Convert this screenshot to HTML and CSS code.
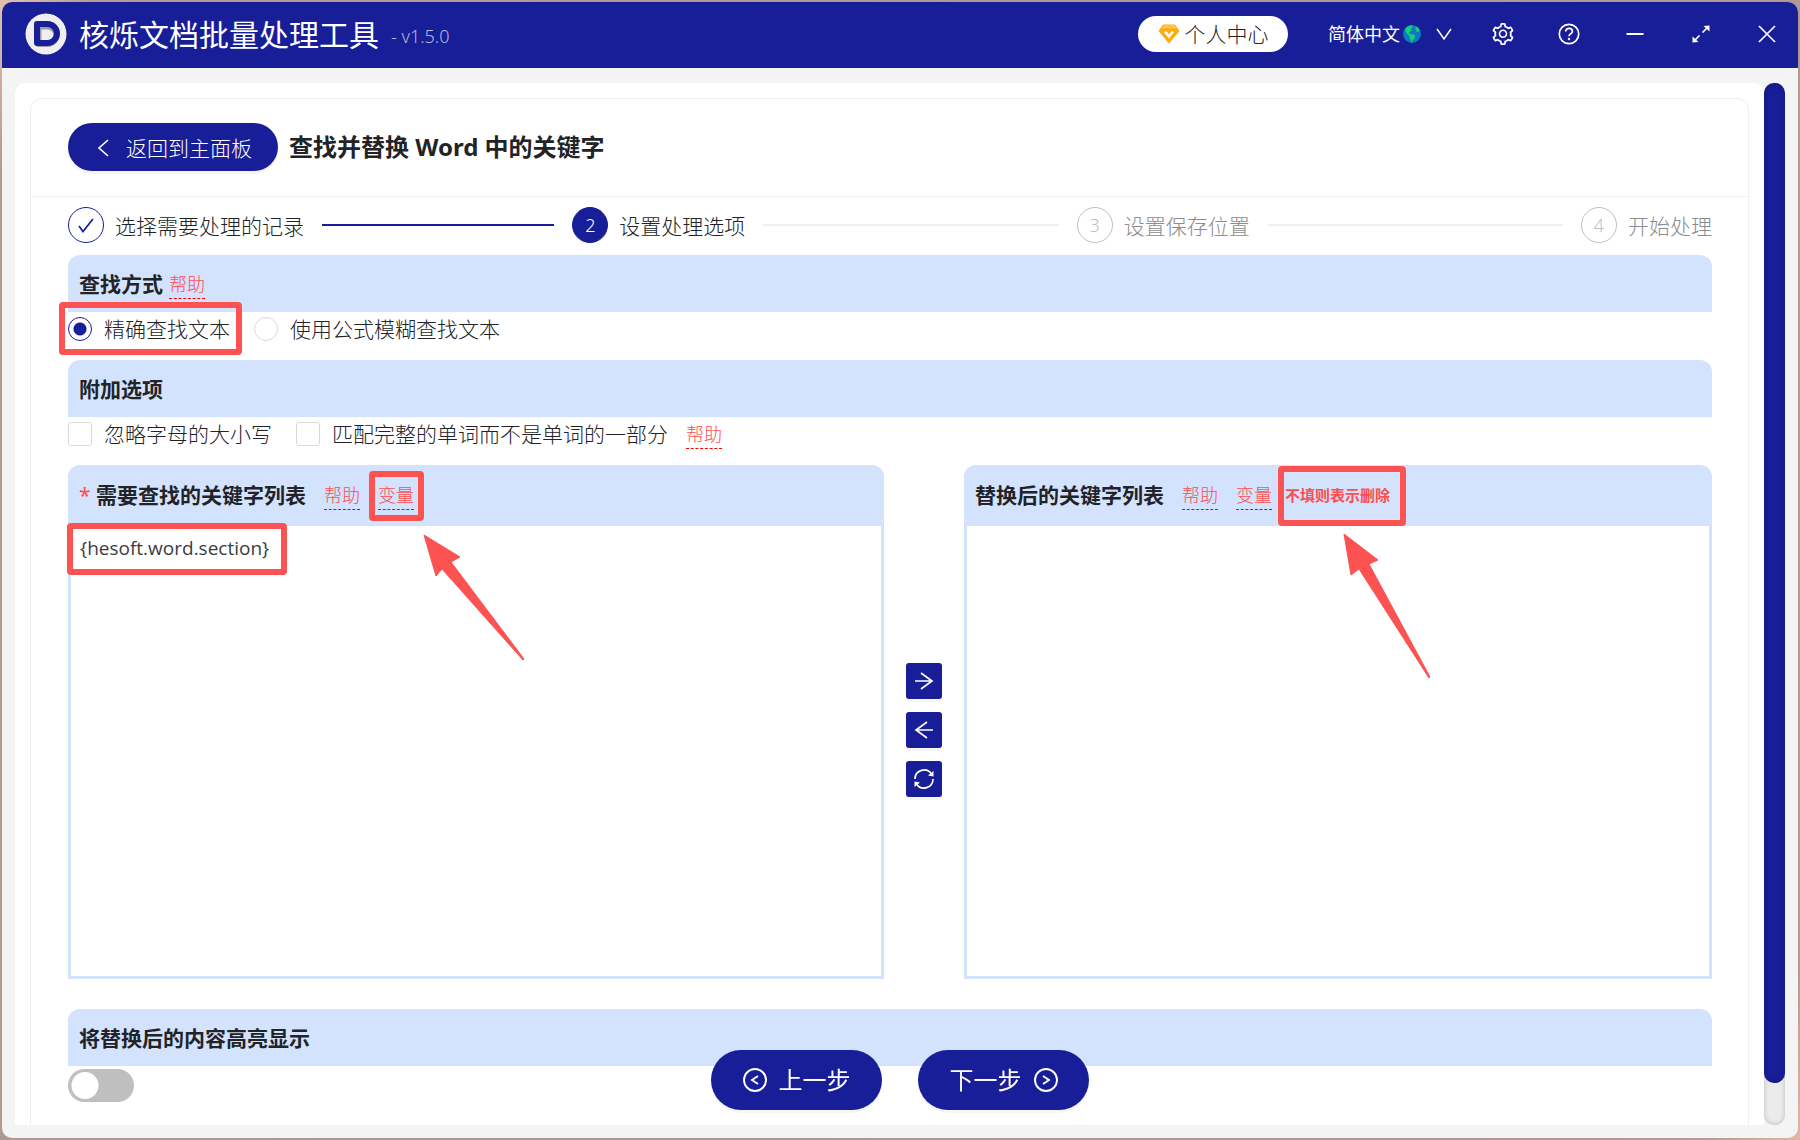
FILE: index.html
```html
<!DOCTYPE html>
<html lang="zh-CN">
<head>
<meta charset="utf-8">
<title>核烁文档批量处理工具</title>
<link rel="stylesheet" href="styles.css">
</head>
<body>
<div class="window">
  <header class="titlebar">
    <svg class="logo" viewBox="0 0 42 42" aria-hidden="true">
      <circle cx="21" cy="21" r="20.500" fill="#efefef"/>
      <path d="M13.500 13.500h9a8.700 8.700 0 0 1 0 17.500h-9z" fill="none" stroke="#9a9aa8" stroke-width="6" stroke-linejoin="round"/>
      <path d="M12 11h10.500a9.500 9.500 0 0 1 0 19H12z" fill="none" stroke="#181d98" stroke-width="6" stroke-linejoin="round"/>
    </svg>
    <h1 class="app-name">核烁文档批量处理工具</h1>
    <span class="version">- v1.5.0</span>
    <button class="account" type="button">
      <svg width="22" height="22" viewBox="0 0 22 22" aria-hidden="true">
        <path d="M5 2h12l4 6-10 12L1 8z" fill="#ffab10" stroke="#ffab10" stroke-width="1" stroke-linejoin="round"/>
        <path d="M5 2h12l2.500 3.500h-17z" fill="#ffc14d"/>
        <path d="M7 8.500l4 5 4-5" fill="none" stroke="#fff" stroke-width="2.600"/>
      </svg>
      <span>个人中心</span>
    </button>
    <button class="language" type="button">
      <span>简体中文</span>
      <svg width="18" height="18" viewBox="0 0 18 18" aria-hidden="true">
        <circle cx="9" cy="9" r="9" fill="#0f78bf"/>
        <path d="M2 4C4 1.500 6 .500 9 .300l1 2.200-2 1 .500 2L6 7.500 7 9l4 .500 1.500 2.500-3 4-.800 1.800L7 14l-.500-3L4 9 2.500 6zM12.500 1l3 2 1.500 3-3 1-1.500-2z" fill="#10cf7f"/>
      </svg>
      <svg class="chevron" width="16" height="16" viewBox="0 0 16 16" aria-hidden="true"><path d="M1 3l7 10 7-10" fill="none" stroke="#fff" stroke-width="1.500"/></svg>
    </button>
    <nav class="window-tools">
      <button type="button" aria-label="设置">
        <svg width="22" height="22" viewBox="64 64 896 896"><path fill="#fff" d="M924.8 625.700l-65.500-56c3.100-19 4.700-38.400 4.700-57.800s-1.600-38.800-4.700-57.800l65.500-56a32.030 32.030 0 0 0 9.300-35.200l-.900-2.600a443.740 443.740 0 0 0-79.700-137.900l-1.800-2.100a32.120 32.120 0 0 0-35.100-9.500l-81.300 28.900c-30-24.600-63.500-44-99.700-57.600l-15.700-85a32.050 32.050 0 0 0-25.800-25.700l-2.700-.500c-52.100-9.400-106.900-9.400-159 0l-2.700.500a32.050 32.050 0 0 0-25.800 25.700l-15.800 85.400a351.860 351.860 0 0 0-99 57.400l-81.900-29.100a32 32 0 0 0-35.100 9.500l-1.800 2.100a446.020 446.020 0 0 0-79.700 137.900l-.900 2.600c-4.500 12.500-.800 26.500 9.300 35.200l66.300 56.600c-3.100 18.800-4.600 38-4.600 57.100 0 19.200 1.500 38.400 4.600 57.100L99 625.500a32.030 32.030 0 0 0-9.300 35.200l.900 2.600c18.100 50.400 44.900 96.900 79.700 137.900l1.800 2.100a32.120 32.120 0 0 0 35.100 9.500l81.900-29.100c29.800 24.500 63.100 43.900 99 57.400l15.800 85.400a32.050 32.050 0 0 0 25.800 25.700l2.700.500a449.400 449.400 0 0 0 159 0l2.700-.500a32.050 32.050 0 0 0 25.800-25.700l15.700-85a350 350 0 0 0 99.700-57.600l81.300 28.900a32 32 0 0 0 35.100-9.500l1.800-2.100c34.800-41.100 61.600-87.500 79.700-137.900l.900-2.600c4.500-12.300.800-26.300-9.300-35zM788.300 465.900c2.500 15.100 3.800 30.600 3.800 46.100s-1.300 31-3.800 46.100l-6.600 40.100 74.700 63.900a370.030 370.030 0 0 1-42.600 73.600L721 702.800l-31.400 25.800c-23.900 19.600-50.500 35-79.300 45.800l-38.100 14.300-17.900 97a377.500 377.500 0 0 1-85 0l-17.900-97.200-37.800-14.500c-28.500-10.800-55-26.200-78.700-45.700l-31.400-25.900-93.400 33.200c-17-22.900-31.200-47.600-42.600-73.600l75.500-64.500-6.500-40c-2.400-14.900-3.700-30.300-3.700-45.500 0-15.300 1.200-30.600 3.700-45.500l6.500-40-75.500-64.500c11.300-26.100 25.600-50.700 42.600-73.600l93.400 33.200 31.400-25.900c23.700-19.500 50.200-34.900 78.700-45.700l37.900-14.300 17.900-97.200c28.100-3.200 56.800-3.200 85 0l17.900 97 38.100 14.300c28.700 10.800 55.400 26.200 79.300 45.800l31.400 25.800 92.800-32.900c17 22.900 31.200 47.600 42.600 73.600L781.800 426l6.500 39.900zM512 326c-97.200 0-176 78.800-176 176s78.800 176 176 176 176-78.800 176-176-78.800-176-176-176zm79.200 255.200A111.600 111.600 0 0 1 512 614c-29.900 0-58-11.700-79.200-32.800A111.600 111.600 0 0 1 400 502c0-29.900 11.700-58 32.800-79.200C454 401.600 482.100 390 512 390c29.900 0 58 11.600 79.200 32.800A111.600 111.600 0 0 1 624 502c0 29.900-11.700 58-32.800 79.200z"/></svg>
      </button>
      <button type="button" aria-label="帮助">
        <svg width="24" height="24" viewBox="0 0 24 24" fill="none" stroke="#fff" stroke-width="1.700"><circle cx="12" cy="12" r="9.700"/><path d="M8.700 9.500c0-4.300 6.700-4.200 6.700 0 0 2.300-3.400 2.300-3.400 4.700"/><circle cx="12" cy="17" r=".400"/></svg>
      </button>
      <button type="button" aria-label="最小化">
        <svg width="24" height="24" viewBox="0 0 24 24"><path d="M3.500 12h17" stroke="#fff" stroke-width="1.800"/></svg>
      </button>
      <button type="button" aria-label="最大化">
        <svg width="24" height="24" viewBox="0 0 24 24"><path d="M13.500 10.500l5-5M10.500 13.500l-5 5" stroke="#fff" stroke-width="1.700"/><path d="M20.500 3.500v6l-6-5.500zM3.500 20.500v-6l6 5.500z" fill="#fff"/></svg>
      </button>
      <button type="button" aria-label="关闭">
        <svg width="24" height="24" viewBox="0 0 24 24"><path d="M4 4l16 16M20 4L4 20" stroke="#fff" stroke-width="1.700"/></svg>
      </button>
    </nav>
  </header>

  <div class="workspace">
    <main class="page">
      <div class="card">
        <div class="card-head">
          <button class="back" type="button">
            <svg width="20" height="20" viewBox="0 0 20 20" aria-hidden="true"><path d="M14 2l-9 8 9 8" fill="none" stroke="#fff" stroke-width="1.600"/></svg>
            <span>返回到主面板</span>
          </button>
          <h2 class="page-title">查找并替换 Word 中的关键字</h2>
        </div>
        <div class="card-body">
          <ol class="steps">
            <li class="step done"><span class="step-mark"><svg width="18" height="18" viewBox="0 0 18 18" aria-hidden="true"><path d="M2 10l4 5.500L16 3" fill="none" stroke="#181d98" stroke-width="1.700"/></svg></span><span class="step-name">选择需要处理的记录</span></li>
            <li class="step current"><span class="step-mark">2</span><span class="step-name">设置处理选项</span></li>
            <li class="step"><span class="step-mark">3</span><span class="step-name">设置保存位置</span></li>
            <li class="step"><span class="step-mark">4</span><span class="step-name">开始处理</span></li>
          </ol>

          <section>
            <div class="bar"><h3>查找方式</h3><a class="hint near" href="#help">帮助</a></div>
            <div class="choices">
              <label class="choice marked"><input type="radio" name="mode" checked><span>精确查找文本</span><span class="frame frame-choice"></span></label>
              <label class="choice"><input type="radio" name="mode"><span>使用公式模糊查找文本</span></label>
            </div>
          </section>

          <section>
            <div class="bar"><h3>附加选项</h3></div>
            <div class="choices">
              <label class="choice"><input type="checkbox"><span>忽略字母的大小写</span></label>
              <label class="choice"><input type="checkbox"><span>匹配完整的单词而不是单词的一部分</span></label>
              <a class="hint after-choice" href="#help">帮助</a>
            </div>
          </section>

          <section class="lists">
            <div class="list">
              <div class="list-head">
                <label for="find"><span class="required">*</span> 需要查找的关键字列表</label>
                <a class="hint" href="#help">帮助</a>
                <a class="hint marked" href="#vars">变量<span class="frame frame-link"></span></a>
              </div>
              <textarea id="find" spellcheck="false">{hesoft.word.section}</textarea>
              <span class="frame frame-text"></span>
              <svg class="arrow arrow-find" width="102" height="126" viewBox="0 0 102 126" aria-hidden="true"><path d="M1 1l36 22-9 5 73 97-1 1-81-91-6 7z" fill="#fc5252" stroke="#fc5252"/></svg>
            </div>
            <div class="swap">
              <button type="button" aria-label="复制到右侧"><svg width="20" height="20" viewBox="0 0 20 20"><path d="M1 10h17M7 2l11 8-11 8" fill="none" stroke="#fff" stroke-width="1.700"/></svg></button>
              <button type="button" aria-label="复制到左侧"><svg width="20" height="20" viewBox="0 0 20 20"><path d="M19 10H2M13 2L2 10l11 8" fill="none" stroke="#fff" stroke-width="1.700"/></svg></button>
              <button type="button" aria-label="交换"><svg width="22" height="22" viewBox="0 0 22 22"><path d="M2 11a9 9 0 0 1 16.500-5M20 11a9 9 0 0 1-16.500 5" fill="none" stroke="#fff" stroke-width="1.700"/><path d="M20.500 3v5.500l-5.500-1zM1.500 19v-5.500l5.500 1z" fill="#fff"/></svg></button>
            </div>
            <div class="list">
              <div class="list-head">
                <label for="replace">替换后的关键字列表</label>
                <a class="hint" href="#help">帮助</a>
                <a class="hint" href="#vars">变量</a>
                <strong class="note marked">不填则表示删除<span class="frame frame-note"></span></strong>
              </div>
              <textarea id="replace" spellcheck="false"></textarea>
              <svg class="arrow arrow-replace" width="88" height="146" viewBox="0 0 88 146" aria-hidden="true"><path d="M1 1l34 26-9 4 61 113-1 1-70-109-8 6z" fill="#fc5252" stroke="#fc5252"/></svg>
            </div>
          </section>

          <section>
            <div class="bar"><h3 id="highlight">将替换后的内容高亮显示</h3></div>
            <input class="switch" type="checkbox" role="switch" aria-labelledby="highlight">
          </section>
        </div>
      </div>
    </main>
    <div class="scroll-track"><div class="scroll-thumb"></div></div>
    <div class="actions">
      <button type="button"><svg width="24" height="24" viewBox="0 0 24 24" fill="none" stroke="#fff" stroke-width="1.900" aria-hidden="true"><circle cx="12" cy="12" r="11"/><path d="M15 8l-6 4 6 4"/></svg><span>上一步</span></button>
      <button type="button"><span>下一步</span><svg width="24" height="24" viewBox="0 0 24 24" fill="none" stroke="#fff" stroke-width="1.900" aria-hidden="true"><circle cx="12" cy="12" r="11"/><path d="M9 8l6 4-6 4"/></svg></button>
    </div>
  </div>
</div>
</body>
</html>
```
FILE: styles.css
```css
* { box-sizing: border-box; }

body {
  margin: 0;
  height: 100vh;
  padding: 2px;
  background: linear-gradient(120deg, #e3bfae, #b39a92 4%, #aa9a92 50%, #b39a92 96%, #e3b5a4);
  color: #212326;
  font: 300 21px/30px "Noto Sans", "Noto Sans CJK SC", sans-serif;
}

button {
  border: 0;
  padding: 0;
  background: none;
  color: inherit;
  font: inherit;
  cursor: pointer;
}

h1, h2, h3, ol { margin: 0; padding: 0; }
svg { display: block; flex: none; }

.window {
  display: flex;
  flex-direction: column;
  height: 100%;
  overflow: hidden;
  border-radius: 10px;
  background: #f4f4f4;
}

/* Title bar */
.titlebar {
  display: flex;
  flex: none;
  align-items: center;
  height: 66px;
  padding: 0 0 2px 23px;
  background: #181d98;
  color: #fff;
}
.logo { width: 42px; height: 42px; }
.app-name {
  margin: 2px 0 0 12px;
  font-size: 30px;
  font-weight: 400;
  white-space: nowrap;
}
.version {
  margin: 4px auto 0 12px;
  color: #b6b8df;
  font-size: 18px;
}
.account {
  display: flex;
  align-items: center;
  justify-content: center;
  gap: 5px;
  width: 150px;
  height: 36px;
  margin-right: 40px;
  border-radius: 18px;
  background: #fff;
  color: #212326;
}
.language {
  display: flex;
  align-items: center;
  gap: 3px;
  margin-right: 20px;
  font-size: 18px;
  font-weight: 400;
}
.chevron { margin-left: 12px; }
.window-tools { display: flex; gap: 4px; }
.window-tools button {
  display: grid;
  place-items: center;
  width: 62px;
  height: 60px;
}

/* Scrolling page */
.workspace {
  position: relative;
  display: flex;
  flex: 1;
  min-height: 0;
  margin: 15px 13px 13px;
}
.page {
  flex: 1;
  overflow: auto;
  scrollbar-width: none;
  padding: 15px 15px 0;
  border-radius: 10px 10px 0 0;
  background: #fff;
}
.scroll-track {
  flex: none;
  width: 21px;
  border-radius: 10px;
  background: #ebebeb;
  box-shadow: inset 0 0 5px rgba(0, 0, 0, .2);
}
.scroll-thumb {
  height: 96%;
  border-radius: 10px;
  background: #181d98;
  box-shadow: inset 0 0 5px rgba(0, 0, 0, .2);
}

.card {
  border: 1px solid #efefef;
  border-radius: 12px;
}
.card-head {
  display: flex;
  align-items: center;
  gap: 11px;
  height: 98px;
  padding: 0 37px 2px;
  border-bottom: 1px solid #efefef;
}
.back {
  display: flex;
  align-items: center;
  justify-content: center;
  gap: 12px;
  width: 210px;
  height: 48px;
  padding-top: 2px;
  border-radius: 24px;
  background: #181d98;
  box-shadow: 0 3px 0 rgba(0, 0, 0, .04);
  color: #fff;
}
.page-title { font-size: 24px; font-weight: 700; }
.card-body { padding: 10px 36px 60px 37px; }

/* Steps */
.steps {
  display: flex;
  gap: 18px;
  margin-bottom: 12px;
  list-style: none;
}
.step {
  display: flex;
  flex: 1;
  align-items: center;
  gap: 11px;
  color: #8c8c8c;
  white-space: nowrap;
}
.step:last-child { flex: none; }
.step:not(:last-child)::after {
  content: "";
  flex: 1;
  height: 2px;
  margin-left: 7px;
  background: #f0f0f0;
}
.step-name { padding-top: 2px; }
.step-mark {
  display: grid;
  place-items: center;
  flex: none;
  width: 36px;
  height: 36px;
  border: 1px solid #bfbfbf;
  border-radius: 50%;
  color: #bfbfbf;
  font-size: 18px;
}
.step.done, .step.current { color: #212326; }
.step.done .step-mark { border-color: #181d98; }
.step.done::after { background: #181d98; }
.step.current .step-mark {
  border-color: #181d98;
  background: #181d98;
  color: #fff;
}

/* Section bars and choices */
.bar {
  display: flex;
  align-items: center;
  height: 57px;
  padding: 0 11px;
  border-radius: 12px 12px 0 0;
  background: #d3e2fd;
}
.bar h3, .list-head label { font-size: 21px; font-weight: 700; }
.hint {
  padding-top: 2px;
  border-bottom: 1px dashed #f00;
  color: #ff4d4f;
  font-size: 18px;
  line-height: 27px;
  text-decoration: none;
}
.hint.near { margin-left: 6px; }
.hint.after-choice { margin-left: -6px; }
.choices {
  display: flex;
  align-items: center;
  gap: 24px;
  height: 48px;
  padding-bottom: 14px;
}
.choice { display: flex; align-items: center; gap: 12px; }
.choice input {
  appearance: none;
  flex: none;
  width: 24px;
  height: 24px;
  margin: 0;
  border: 1px solid #d9d9d9;
  border-radius: 3px;
  background: #fff;
}
.choice input[type="radio"] { border-radius: 50%; }
.choice input[type="radio"]:checked {
  border-color: #181d98;
  background: radial-gradient(circle, #181d98 6px, #fff 7px);
}

/* Keyword lists */
.lists {
  display: grid;
  grid-template-columns: 12fr 80px 11fr;
  margin-bottom: 30px;
}
.list {
  position: relative;
  display: flex;
  flex-direction: column;
}
.list-head {
  display: flex;
  align-items: center;
  height: 61px;
  padding: 0 11px 1px;
  border-radius: 12px 12px 0 0;
  background: #d3e2fd;
}
.list-head .hint { margin-left: 18px; }
.required { color: #ff4d4f; font-weight: 400; }
.note {
  margin-left: 13px;
  color: #ff4d4f;
  font-size: 15px;
  font-weight: 700;
}
textarea {
  display: block;
  width: 100%;
  height: 453px;
  padding: 7px 9px;
  border: 3px solid #d3e2fd;
  border-top: 0;
  outline: 0;
  resize: none;
  background: #fff;
  color: #3b3d40;
  font: 400 19px/30px "Open Sans", "Noto Sans CJK SC", sans-serif;
}
.swap {
  display: flex;
  flex-direction: column;
  align-items: center;
  justify-content: center;
  gap: 13px;
  padding-top: 16px;
}
.swap button {
  display: grid;
  place-items: center;
  width: 36px;
  height: 36px;
  border-radius: 3px;
  background: #181d98;
  box-shadow: 0 3px 0 rgba(0, 0, 0, .04);
}

.switch {
  appearance: none;
  display: block;
  width: 66px;
  height: 33px;
  margin: 3px 0 0;
  border-radius: 17px;
  background: radial-gradient(circle at 17px 50%, #fff 13px, #bfbfbf 14px);
}

/* Floating step buttons */
.actions {
  position: absolute;
  right: 0;
  bottom: 15px;
  left: 0;
  display: flex;
  justify-content: center;
  gap: 36px;
  pointer-events: none;
}
.actions button {
  display: flex;
  align-items: center;
  justify-content: center;
  gap: 12px;
  width: 171px;
  height: 60px;
  border-radius: 30px;
  background: #181d98;
  box-shadow: 0 3px 0 rgba(0, 0, 0, .04);
  color: #fff;
  font-size: 24px;
  font-weight: 400;
  pointer-events: auto;
}

/* Tutorial annotations */
.marked { position: relative; }
.frame {
  position: absolute;
  border: 6px solid #fc5252;
  border-radius: 4px;
  pointer-events: none;
}
.frame-choice { inset: -12px -12px -11px -9px; }
.frame-link { inset: -9px -10px -12px -9px; }
.frame-note { inset: -14px -16px -16px -7px; }
.frame-text { top: 58px; left: -1px; width: 220px; height: 52px; }
.arrow { position: absolute; pointer-events: none; }
.arrow-find { top: 69px; left: 355px; }
.arrow-replace { top: 68px; left: 379px; }
```
